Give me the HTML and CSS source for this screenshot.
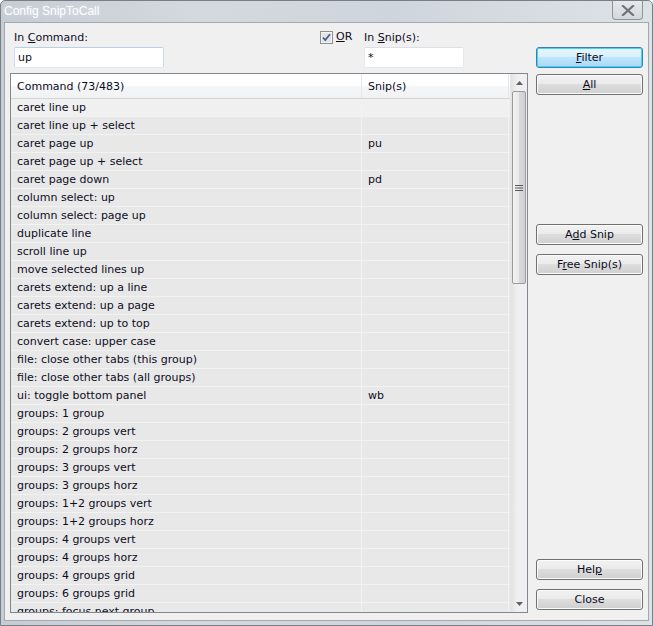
FILE: index.html
```html
<!DOCTYPE html>
<html>
<head>
<meta charset="utf-8">
<link rel="stylesheet" href="styles.css">
</head>
<body>
<div class="win">
  <div class="titlebar">
    <span class="title">Config SnipToCall</span>
    <span class="closebtn"><svg width="14" height="11" viewBox="0 0 14 11"><path d="M2 1 L12 10 M12 1 L2 10" stroke="#6f7478" stroke-width="2.2" stroke-linecap="square"/></svg></span>
  </div>
  <div class="client">
    <div class="leftcol">
      <div class="topctl">
        <label class="lbl c1">In <u>C</u>ommand:</label>
        <span class="chkgrp">
          <span class="chk"><svg width="13" height="13" viewBox="0 0 13 13"><rect x="0.5" y="0.5" width="12" height="12" fill="#f4f4f4" stroke="#8e8f8f"/><rect x="2" y="2" width="9" height="9" fill="#e4e4e4"/><path d="M3 6.5 L5.2 9 L10 3.2" fill="none" stroke="#4a5f97" stroke-width="1.8"/></svg></span>
          <span class="lbl"><u>O</u>R</span>
        </span>
        <label class="lbl c4">In <u>S</u>nip(s):</label>
        <div class="edit e1">up</div>
        <div class="edit e4">*</div>
      </div>
      <div class="list">
        <div class="listbody">
          <div class="hdr"><div class="hc h1">Command (73/483)</div><div class="hc h2">Snip(s)</div><div class="hc h3"></div></div>
          <div class="rows">
            <div class="row first"><div class="c a">caret line up</div><div class="c b"></div></div>
            <div class="row"><div class="c a">caret line up + select</div><div class="c b"></div></div>
            <div class="row"><div class="c a">caret page up</div><div class="c b">pu</div></div>
            <div class="row"><div class="c a">caret page up + select</div><div class="c b"></div></div>
            <div class="row"><div class="c a">caret page down</div><div class="c b">pd</div></div>
            <div class="row"><div class="c a">column select: up</div><div class="c b"></div></div>
            <div class="row"><div class="c a">column select: page up</div><div class="c b"></div></div>
            <div class="row"><div class="c a">duplicate line</div><div class="c b"></div></div>
            <div class="row"><div class="c a">scroll line up</div><div class="c b"></div></div>
            <div class="row"><div class="c a">move selected lines up</div><div class="c b"></div></div>
            <div class="row"><div class="c a">carets extend: up a line</div><div class="c b"></div></div>
            <div class="row"><div class="c a">carets extend: up a page</div><div class="c b"></div></div>
            <div class="row"><div class="c a">carets extend: up to top</div><div class="c b"></div></div>
            <div class="row"><div class="c a">convert case: upper case</div><div class="c b"></div></div>
            <div class="row"><div class="c a">file: close other tabs (this group)</div><div class="c b"></div></div>
            <div class="row"><div class="c a">file: close other tabs (all groups)</div><div class="c b"></div></div>
            <div class="row"><div class="c a">ui: toggle bottom panel</div><div class="c b">wb</div></div>
            <div class="row"><div class="c a">groups: 1 group</div><div class="c b"></div></div>
            <div class="row"><div class="c a">groups: 2 groups vert</div><div class="c b"></div></div>
            <div class="row"><div class="c a">groups: 2 groups horz</div><div class="c b"></div></div>
            <div class="row"><div class="c a">groups: 3 groups vert</div><div class="c b"></div></div>
            <div class="row"><div class="c a">groups: 3 groups horz</div><div class="c b"></div></div>
            <div class="row"><div class="c a">groups: 1+2 groups vert</div><div class="c b"></div></div>
            <div class="row"><div class="c a">groups: 1+2 groups horz</div><div class="c b"></div></div>
            <div class="row"><div class="c a">groups: 4 groups vert</div><div class="c b"></div></div>
            <div class="row"><div class="c a">groups: 4 groups horz</div><div class="c b"></div></div>
            <div class="row"><div class="c a">groups: 4 groups grid</div><div class="c b"></div></div>
            <div class="row"><div class="c a">groups: 6 groups grid</div><div class="c b"></div></div>
            <div class="row"><div class="c a">groups: focus next group</div><div class="c b"></div></div>
          </div>
        </div>
        <div class="vscroll">
          <div class="arrow"><svg width="7" height="4" viewBox="0 0 7 4"><path d="M0 4 L3.5 0 L7 4 Z" fill="#606060"/></svg></div>
          <div class="thumb"><svg width="8" height="8" viewBox="0 0 8 8"><path d="M0 1.5H8M0 4H8M0 6.5H8" stroke="#5a5a5a" stroke-width="1"/></svg></div>
          <div class="track"></div>
          <div class="arrow"><svg width="7" height="4" viewBox="0 0 7 4"><path d="M0 0 L7 0 L3.5 4 Z" fill="#606060"/></svg></div>
        </div>
      </div>
    </div>
    <div class="rightcol">
      <button class="btn def"><u>F</u>ilter</button>
      <button class="btn b-all"><u>A</u>ll</button>
      <button class="btn b-add">A<u>d</u>d Snip</button>
      <button class="btn b-free">F<u>r</u>ee Snip(s)</button>
      <div class="sp2"></div>
      <button class="btn">Hel<u>p</u></button>
      <button class="btn b-close">Close</button>
    </div>
  </div>
</div>
</body>
</html>
```
FILE: styles.css
```css
* { box-sizing: border-box; }
html, body { margin: 0; padding: 0; }
body {
  width: 653px; height: 626px; overflow: hidden;
  font-family: "DejaVu Sans", sans-serif;
  font-size: 11px;
  color: #0c0c1e;
  background: #fff;
}
.win {
  width: 653px; height: 626px;
  display: flex; flex-direction: column;
  background: linear-gradient(90deg, #c6ccd4 0%, #d4d9df 30%, #cfd5dc 60%, #dde2e7 100%);
  border: 1px solid #7a7f86;
  border-radius: 5px 5px 0 0;
}
.titlebar {
  height: 21px;
  display: flex; align-items: flex-start;
  padding-left: 3px;
}
.title {
  color: #fff;
  font-family: "Liberation Sans", sans-serif;
  font-size: 12px;
  line-height: 20px;
  text-shadow: 0 0 5px rgba(255,255,255,0.5);
}
.closebtn {
  margin-left: auto;
  margin-right: 9px;
  width: 31px; height: 19px;
  border: 1px solid #8d949b;
  border-top: none;
  border-radius: 0 0 4px 4px;
  background: linear-gradient(#e5e8ec, #d3d8de);
  display: flex; align-items: center; justify-content: center;
}
.client {
  flex: 1;
  margin: 0 3px 4px 3px;
  background: #f0f0f0;
  border: 1px solid #a4a9b0;
  display: flex;
  padding-left: 5px;
}
.leftcol {
  width: 518px;
  display: flex; flex-direction: column;
}
.topctl {
  display: grid;
  grid-template-columns: 4px 150px 156px 44px 100px;
  grid-template-rows: 22px 28px;
  height: 50px;
}
.lbl { white-space: nowrap; }
.c1 { grid-column: 2; grid-row: 1; line-height: 16px; align-self: end; margin-bottom: -1px; }
.chkgrp { grid-column: 4; grid-row: 1; display: flex; align-items: center; gap: 3px; padding-top: 6px; }
.chkgrp .lbl { line-height: 16px; }
.chk { width: 13px; height: 13px; display: block; }
.chk svg { display: block; }
.c4 { grid-column: 5; grid-row: 1; line-height: 16px; align-self: end; margin-bottom: -1px; }
.edit {
  grid-row: 2;
  height: 21px;
  border: 1px solid #abadb3;
  border-radius: 2px;
  background: #fff;
  padding: 3px 0 0 3px;
  line-height: 14px;
  margin-top: 2px;
}
.e1 { grid-column: 2; border-color: #b8d0ea #c5dbf1 #e3e9ef #c5dbf1; }
.e4 { grid-column: 5; border-color: #dbdfe6 #e3e9ef #e3e9ef #e3e9ef; }
.list {
  height: 540px;
  border: 1px solid #828790;
  display: flex;
  background: #fff;
}
.listbody { flex: 1; min-width: 0; display: flex; flex-direction: column; overflow: hidden; }
.hdr {
  height: 25px;
  display: flex;
  background: linear-gradient(#ffffff 0%, #ffffff 50%, #f5f6f7 51%, #f1f2f4 100%);
  border-bottom: 1px solid #d5d5d5;
  flex: none;
}
.hc { line-height: 25px; padding-left: 6px; border-right: 1px solid #e3e8ee; flex: none; }
.h1 { width: 351px; }
.h2 { width: 147px; }
.h3 { flex: 1; border-right: none; }
.rows { flex: 1; background: #e8e8e8; }
.row {
  height: 18px;
  display: flex;
  border-bottom: 1px solid #f2f2f2;
  background: #e8e8e8;
}
.row.first { background: #f0f0f0; }
.c { line-height: 18px; padding-left: 6px; white-space: nowrap; overflow: hidden; border-right: 1px solid #f2f2f2; flex: none; }
.a { width: 351px; }
.b { width: 147px; }
.vscroll {
  width: 17px;
  flex: none;
  display: flex; flex-direction: column;
  background: linear-gradient(90deg, #e3e3e3, #f0f0f0 40%, #f0f0f0);
  border-left: 1px solid #e6e6e6;
}
.arrow { height: 17px; display: flex; align-items: center; justify-content: center; }
.thumb {
  height: 193px;
  margin: 0 1px;
  border: 1px solid #9a9a9a;
  border-radius: 2px;
  background: linear-gradient(90deg, #f3f3f3, #e8e8e8 50%, #d9d9d9 51%, #d0d0d0);
  display: flex; align-items: center; justify-content: center;
}
.thumb svg { display: block; }
.track { flex: 1; }
.rightcol {
  margin-left: 8px;
  width: 107px;
  display: flex; flex-direction: column;
  padding-top: 24px;
}
.btn {
  height: 21px;
  width: 107px;
  flex: none;
  font: inherit;
  color: #0c0c1e;
  border: 1px solid #707070;
  border-radius: 3px;
  background: linear-gradient(#f2f2f2 0%, #ebebeb 45%, #dddddd 50%, #cfcfcf 100%);
  box-shadow: inset 0 0 0 1px #fbfbfb;
  padding: 0;
  line-height: 18px;
  text-align: center;
}
.btn.def {
  border-color: #3c7fb1;
  background: linear-gradient(#eaf6fd 0%, #d9f0fc 45%, #bee6fd 50%, #a7d9f5 100%);
  box-shadow: inset 0 0 0 1px #48d0f8;
}
.b-all { margin-top: 6px; }
.b-add { margin-top: 129px; }
.b-free { margin-top: 9px; }
.b-close { margin-top: 9px; margin-bottom: 10px; }
.sp2 { flex: 1; }
```
